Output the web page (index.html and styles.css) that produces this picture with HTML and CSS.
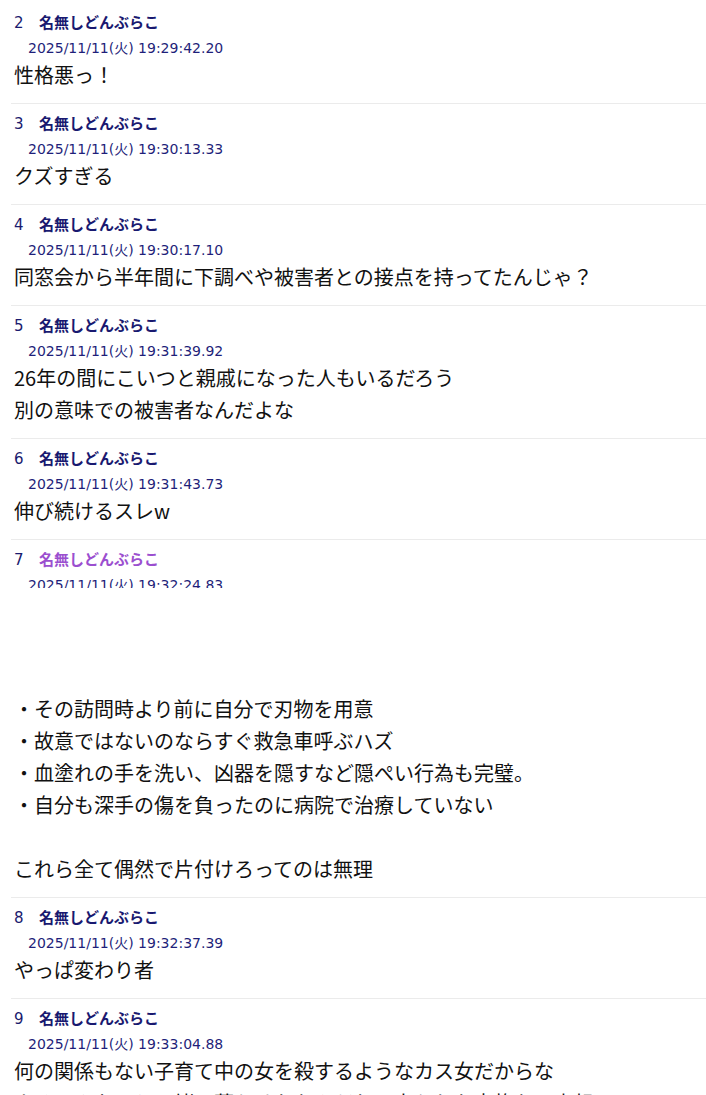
FILE: index.html
```html
<!DOCTYPE html>
<html lang="ja">
<head>
    <meta charset="UTF-8">
    <meta name="viewport" content="width=device-width, initial-scale=1.0">
    <title>スレッド</title>
    <link rel="stylesheet" href="styles.css">
</head>
<body>
    <div class="thread">
        <div class="res">
            <div class="res-head"><span class="res-num">2</span><span class="res-name">名無しどんぶらこ</span></div>
            <div class="res-date">2025/11/11(火) 19:29:42.20</div>
            <div class="res-body">性格悪っ！</div>
        </div>
        <div class="res">
            <div class="res-head"><span class="res-num">3</span><span class="res-name">名無しどんぶらこ</span></div>
            <div class="res-date">2025/11/11(火) 19:30:13.33</div>
            <div class="res-body">クズすぎる</div>
        </div>
        <div class="res">
            <div class="res-head"><span class="res-num">4</span><span class="res-name">名無しどんぶらこ</span></div>
            <div class="res-date">2025/11/11(火) 19:30:17.10</div>
            <div class="res-body">同窓会から半年間に下調べや被害者との接点を持ってたんじゃ？</div>
        </div>
        <div class="res">
            <div class="res-head"><span class="res-num">5</span><span class="res-name">名無しどんぶらこ</span></div>
            <div class="res-date">2025/11/11(火) 19:31:39.92</div>
            <div class="res-body">26年の間にこいつと親戚になった人もいるだろう<br>別の意味での被害者なんだよな</div>
        </div>
        <div class="res">
            <div class="res-head"><span class="res-num">6</span><span class="res-name">名無しどんぶらこ</span></div>
            <div class="res-date">2025/11/11(火) 19:31:43.73</div>
            <div class="res-body">伸び続けるスレw</div>
        </div>
        <div class="res">
            <div class="res-head"><span class="res-num">7</span><span class="res-name visited">名無しどんぶらこ</span></div>
            <div class="res-date clipped">2025/11/11(火) 19:32:24.83</div>
            <div class="res-embed"></div>
            <div class="res-body">・その訪問時より前に自分で刃物を用意<br>・故意ではないのならすぐ救急車呼ぶハズ<br>・血塗れの手を洗い、凶器を隠すなど隠ぺい行為も完璧。<br>・自分も深手の傷を負ったのに病院で治療していない<br><br>これら全て偶然で片付けろってのは無理</div>
        </div>
        <div class="res">
            <div class="res-head"><span class="res-num">8</span><span class="res-name">名無しどんぶらこ</span></div>
            <div class="res-date">2025/11/11(火) 19:32:37.39</div>
            <div class="res-body">やっぱ変わり者</div>
        </div>
        <div class="res">
            <div class="res-head"><span class="res-num">9</span><span class="res-name">名無しどんぶらこ</span></div>
            <div class="res-date">2025/11/11(火) 19:33:04.88</div>
            <div class="res-body">何の関係もない子育て中の女を殺するようなカス女だからな<br>よくこんなのと一緒に暮らせたもんだわ、売られた家族も可哀想</div>
        </div>
    </div>
</body>
</html>
```

FILE: styles.css
```css
html, body {
    margin: 0;
    padding: 0;
    background-color: #fff;
    font-family: "Noto Sans CJK JP", "DejaVu Sans", sans-serif;
    overflow: hidden;
}
.thread {
    margin-top: 3px;
    margin-left: 11px;
}
.res {
    padding: 7px 0 12px 3px;
    border-bottom: 1px solid #ebebeb;
}
.res-head {
    height: 24px;
    line-height: 24px;
    font-size: 15px;
}
.res-num {
    display: inline-block;
    width: 25px;
    color: #1a1a6e;
    font-family: "DejaVu Sans", sans-serif;
    font-size: 15px;
}
.res-name {
    color: #191970;
    font-weight: bold;
}
.res-name.visited {
    color: #9b4fcf;
}
.res-date {
    height: 23px;
    padding-top: 2px;
    line-height: 24px;
    padding-left: 14px;
    font-family: "DejaVu Sans", "Noto Sans CJK JP", sans-serif;
    font-size: 14px;
    color: #1f1f7a;
}
.res-date.clipped {
    height: 15px;
    overflow: hidden;
}
.res-embed {
    height: 105px;
}
.res-body {
    font-size: 20px;
    line-height: 32px;
    color: #111;
}
```
